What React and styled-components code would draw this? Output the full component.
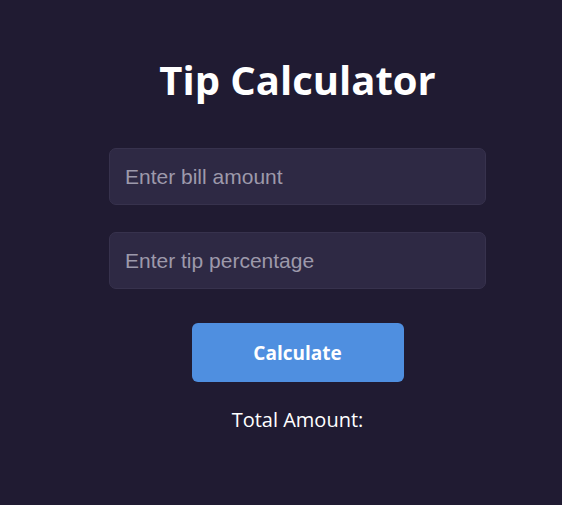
import React, { useState } from 'react';
import styled, { createGlobalStyle } from 'styled-components';

const GlobalStyle = createGlobalStyle`
    html, body {
        margin: 0;
        padding: 0;
        background: #201b32;
        height: 100%;
    }
    #root {
        min-height: 100vh;
    }
`;

const Page = styled.div`
    min-height: 100vh;
    background: #201b32;
    padding: 0 0 0 33px;
    box-sizing: border-box;
    display: flex;
    justify-content: center;
    font-family: "Open Sans", "Noto Sans", sans-serif;
`;

const Card = styled.div`
    width: 377px;
    padding-top: 52px;
    display: flex;
    flex-direction: column;
    align-items: center;
`;

const Title = styled.h1`
    margin: 0 0 40px;
    color: #ffffff;
    font-size: 40px;
    font-weight: 700;
    line-height: 56px;
`;

const Input = styled.input`
    width: 100%;
    height: 57px;
    box-sizing: border-box;
    margin-bottom: ${(p) => p.gap}px;
    padding: 0 15px;
    background: #2e2944;
    border: 1px solid #37324d;
    border-radius: 7px;
    color: #e6e4ee;
    font-family: "Liberation Sans", Arial, sans-serif;
    font-size: 21px;
    outline: none;

    &::placeholder {
        color: #9d99ab;
    }
`;

const CalcButton = styled.button`
    width: 212px;
    height: 59px;
    border: none;
    border-radius: 6px;
    background: #4f8fe0;
    color: #ffffff;
    font-family: "Open Sans", "Noto Sans", sans-serif;
    font-size: 19px;
    font-weight: 700;
    cursor: pointer;
`;

const Result = styled.p`
    margin: 24px 0 0;
    color: #ffffff;
    font-size: 20px;
    line-height: 28px;
`;

export default function App() {
    const [bill, setBill] = useState('');
    const [tip, setTip] = useState('');
    const [total, setTotal] = useState('');

    const calculate = () => {
        const b = parseFloat(bill);
        const t = parseFloat(tip);
        if (isNaN(b) || isNaN(t)) return;
        setTotal((b + (b * t) / 100).toFixed(2));
    };

    return (
        <>
            <GlobalStyle />
            <Page>
                <Card>
                    <Title>Tip Calculator</Title>
                    <Input
                        gap={27}
                        placeholder="Enter bill amount"
                        value={bill}
                        onChange={(e) => setBill(e.target.value)}
                    />
                    <Input
                        gap={34}
                        placeholder="Enter tip percentage"
                        value={tip}
                        onChange={(e) => setTip(e.target.value)}
                    />
                    <CalcButton onClick={calculate}>Calculate</CalcButton>
                    <Result>Total Amount: {total}</Result>
                </Card>
            </Page>
        </>
    );
}
